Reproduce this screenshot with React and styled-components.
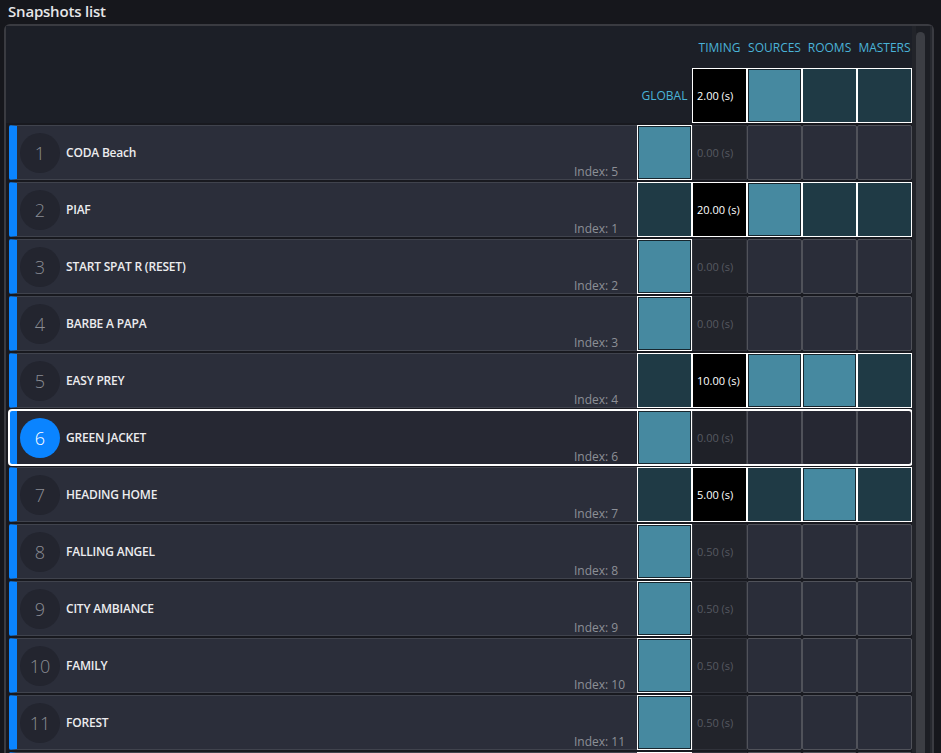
import React from "react";
import styled, { createGlobalStyle, css } from "styled-components";

const GlobalStyle = createGlobalStyle`
  html, body {
    margin: 0;
    padding: 0;
    background: #16171c;
    overflow: hidden;
  }
  #root {
    height: 753px;
    overflow: hidden;
    font-family: "Open Sans", "Noto Sans", sans-serif;
  }
  * { box-sizing: border-box; }
`;

const COLORS = {
  blue: "#0a84ff",
  light: "#4689a0",
  dark: "#1f3a45",
  label: "#4ab3d8",
};

const Page = styled.div`
  display: flex;
  flex-direction: column;
`;

const Title = styled.h1`
  margin: 0;
  height: 24px;
  padding: 0 8px;
  font-size: 15px;
  line-height: 23px;
  font-weight: 600;
  color: #e6e6e8;
  letter-spacing: -0.2px;
`;

const Panel = styled.div`
  display: flex;
  margin: 0 7px 0 4px;
  border: 2px solid #3a3b41;
  border-bottom: none;
  border-radius: 6px 6px 0 0;
  background: #18191f;
  height: 800px;
`;

const Content = styled.div`
  flex: 1;
  display: flex;
  flex-direction: column;
  gap: 2px;
  padding-left: 3px;
`;

const Columns = css`
  display: grid;
  grid-template-columns: 1fr repeat(5, 55px);
`;

const Header = styled.div`
  ${Columns};
  grid-template-rows: 16px 55px;
  row-gap: 12px;
  padding-top: 14px;
  margin-left: -3px;
  padding-left: 3px;
  background: #1c1f27;
`;

const ColLabel = styled.div`
  grid-row: 1;
  grid-column: ${(p) => p.$col};
  text-align: center;
  font-size: 12px;
  line-height: 16px;
  color: ${COLORS.label};
  white-space: nowrap;
`;

const GlobalLabel = styled.div`
  grid-row: 2;
  grid-column: 2;
  display: flex;
  align-items: center;
  justify-content: center;
  font-size: 12px;
  color: ${COLORS.label};
`;

const Row = styled.div`
  ${Columns};
  height: 55px;
  ${(p) =>
    p.$selected &&
    css`
      outline: 2px solid #ffffff;
      outline-offset: -1px;
      border-radius: 3px;
    `}
`;

const RowMain = styled.div`
  display: flex;
  align-items: center;
  min-width: 0;
  background: ${(p) => (p.$selected ? "#262833" : "#2b2e3a")};
  border: 1px solid #40434d;
  border-left: 8px solid ${COLORS.blue};
  border-right: none;
  border-radius: 2px 0 0 2px;
`;

const Badge = styled.div`
  width: 40px;
  height: 40px;
  margin-left: 3px;
  flex: none;
  border-radius: 50%;
  display: flex;
  align-items: center;
  justify-content: center;
  background: ${(p) => (p.$selected ? COLORS.blue : "#23252f")};
  color: ${(p) => (p.$selected ? "#ffffff" : "#8a8c93")};
  font-size: 18px;
  font-weight: 300;
`;

const Name = styled.div`
  margin-left: 6px;
  font-size: 12px;
  font-weight: 600;
  color: #ececee;
  white-space: nowrap;
  letter-spacing: -0.2px;
`;

const IndexLabel = styled.div`
  margin-left: auto;
  align-self: flex-end;
  width: 63px;
  margin-bottom: -1px;
  font-size: 12px;
  line-height: 16px;
  color: #8d9097;
  white-space: nowrap;
`;

const cellVariants = {
  light: css`
    background: ${COLORS.light};
    border: 1px solid #ffffff;
    box-shadow: inset 0 0 0 1px #17262e;
  `,
  dark: css`
    background: ${COLORS.dark};
    border: 1px solid #ffffff;
  `,
  black: css`
    background: #000000;
    border: 1px solid #ffffff;
    color: #ffffff;
  `,
  empty: css`
    background: ${(p) => (p.$selected ? "#262833" : "#2a2d39")};
    border: 1px solid #50525a;
    border-radius: 2px;
  `,
  emptyTiming: css`
    background: ${(p) => (p.$selected ? "#1f2128" : "#22242b")};
    border: 1px solid ${(p) => (p.$selected ? "#3a3c43" : "#30323a")};
    color: #565961;
  `,
};

const Cell = styled.div`
  height: 55px;
  display: flex;
  align-items: center;
  padding-left: 4px;
  font-size: 11px;
  white-space: nowrap;
  grid-row: ${(p) => p.$row || "auto"};
  grid-column: ${(p) => p.$col || "auto"};
  ${(p) => cellVariants[p.$variant]};
`;

const Scroll = styled.div`
  width: 20px;
  flex: none;
  display: flex;
  background: linear-gradient(90deg, #22242a 0 4px, #1c1e24 4px 18px, #26282e 18px);
  padding-top: 6px;
`;

const Thumb = styled.div`
  width: 9px;
  margin-left: 4px;
  border-radius: 5px 5px 0 0;
  background: #3c3e44;
`;

const rows = [
  { n: 1, name: "CODA Beach", index: 5, t: "0.00 (s)" },
  { n: 2, name: "PIAF", index: 1, t: "20.00 (s)", cells: ["dark", "light", "dark", "dark"] },
  { n: 3, name: "START SPAT R (RESET)", index: 2, t: "0.00 (s)" },
  { n: 4, name: "BARBE A PAPA", index: 3, t: "0.00 (s)" },
  { n: 5, name: "EASY PREY", index: 4, t: "10.00 (s)", cells: ["dark", "light", "light", "dark"] },
  { n: 6, name: "GREEN JACKET", index: 6, t: "0.00 (s)", selected: true },
  { n: 7, name: "HEADING HOME", index: 7, t: "5.00 (s)", cells: ["dark", "dark", "light", "dark"] },
  { n: 8, name: "FALLING ANGEL", index: 8, t: "0.50 (s)" },
  { n: 9, name: "CITY AMBIANCE", index: 9, t: "0.50 (s)" },
  { n: 10, name: "FAMILY", index: 10, t: "0.50 (s)" },
  { n: 11, name: "FOREST", index: 11, t: "0.50 (s)" },
  { n: 12, stub: true },
];

function SnapshotRow({ r }) {
  const active = !!r.cells;
  const [g, s, ro, m] = active ? r.cells : ["light", "empty", "empty", "empty"];
  return (
    <Row $selected={r.selected}>
      <RowMain $selected={r.selected}>
        {!r.stub && (
          <>
            <Badge $selected={r.selected}>{r.n}</Badge>
            <Name>{r.name}</Name>
            <IndexLabel>Index: {r.index}</IndexLabel>
          </>
        )}
      </RowMain>
      <Cell $variant={g} $selected={r.selected} />
      <Cell $variant={active ? "black" : "emptyTiming"} $selected={r.selected}>
        {r.t}
      </Cell>
      <Cell $variant={s} $selected={r.selected} />
      <Cell $variant={ro} $selected={r.selected} />
      <Cell $variant={m} $selected={r.selected} />
    </Row>
  );
}

export default function App() {
  return (
    <Page>
      <GlobalStyle />
      <Title>Snapshots list</Title>
      <Panel>
        <Content>
          <Header>
            <ColLabel $col={3}>TIMING</ColLabel>
            <ColLabel $col={4}>SOURCES</ColLabel>
            <ColLabel $col={5}>ROOMS</ColLabel>
            <ColLabel $col={6}>MASTERS</ColLabel>
            <GlobalLabel>GLOBAL</GlobalLabel>
            <Cell $row={2} $col={3} $variant="black">2.00 (s)</Cell>
            <Cell $row={2} $col={4} $variant="light" />
            <Cell $row={2} $col={5} $variant="dark" />
            <Cell $row={2} $col={6} $variant="dark" />
          </Header>
          {rows.map((r) => (
            <SnapshotRow key={r.n} r={r} />
          ))}
        </Content>
        <Scroll>
          <Thumb />
        </Scroll>
      </Panel>
    </Page>
  );
}
